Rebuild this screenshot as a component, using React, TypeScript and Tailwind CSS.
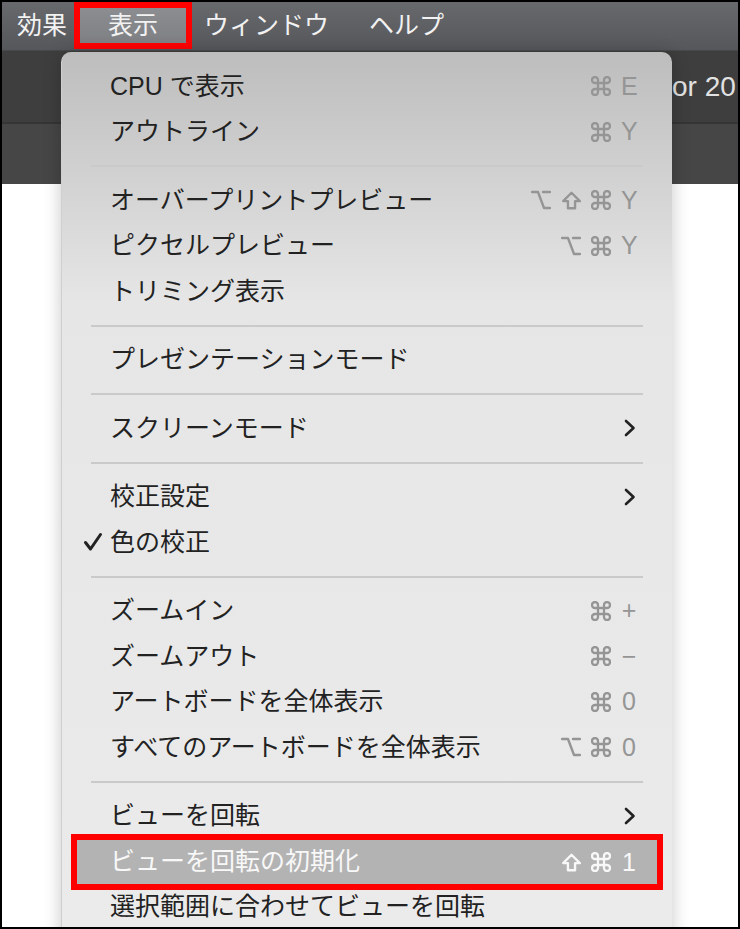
import React from "react";

type Item =
  | { sep: true }
  | {
      label: string;
      keys?: string[];
      sub?: boolean;
      check?: boolean;
      hl?: boolean;
    };

const items: Item[] = [
  { label: "CPU で表示", keys: ["cmd", "E"] },
  { label: "アウトライン", keys: ["cmd", "Y"] },
  { sep: true },
  { label: "オーバープリントプレビュー", keys: ["opt", "shift", "cmd", "Y"] },
  { label: "ピクセルプレビュー", keys: ["opt", "cmd", "Y"] },
  { label: "トリミング表示" },
  { sep: true },
  { label: "プレゼンテーションモード" },
  { sep: true },
  { label: "スクリーンモード", sub: true },
  { sep: true },
  { label: "校正設定", sub: true },
  { label: "色の校正", check: true },
  { sep: true },
  { label: "ズームイン", keys: ["cmd", "+"] },
  { label: "ズームアウト", keys: ["cmd", "−"] },
  { label: "アートボードを全体表示", keys: ["cmd", "0"] },
  { label: "すべてのアートボードを全体表示", keys: ["opt", "cmd", "0"] },
  { sep: true },
  { label: "ビューを回転", sub: true },
  { label: "ビューを回転の初期化", keys: ["shift", "cmd", "1"], hl: true },
  { label: "選択範囲に合わせてビューを回転" },
];

const KeyIcon = ({ k }: { k: string }) => {
  if (k === "cmd")
    return (
      <svg width="20" height="20" viewBox="2 2 20 20" className="shrink-0" fill="none" stroke="currentColor" strokeWidth="2.3">
        <path d="M15 6v12a3 3 0 1 0 3-3H6a3 3 0 1 0 3 3V6a3 3 0 1 0-3 3h12a3 3 0 1 0-3-3" />
      </svg>
    );
  if (k === "opt")
    return (
      <svg width="20" height="20" viewBox="2 2 20 20" className="shrink-0" fill="none" stroke="currentColor" strokeWidth="2.4" strokeLinecap="round" strokeLinejoin="round">
        <path d="M3 4h6l6 16h6" />
        <path d="M14 4h7" />
      </svg>
    );
  if (k === "shift")
    return (
      <svg width="19" height="19" viewBox="4 4 16 16" className="shrink-0" fill="none" stroke="currentColor" strokeWidth="2" strokeLinejoin="round">
        <path d="M9 18.5v-6H5l7-7 7 7h-4v6H9z" />
      </svg>
    );
  return null;
};

const Keys = ({ keys, light }: { keys: string[]; light?: boolean }) => (
  <div className={`flex items-center gap-[10px] ${light ? "text-[#f8f8f8]" : "text-[#959595]"}`}>
    {keys.map((k, i) =>
      i === keys.length - 1 ? (
        <span key={i} className="w-[16px] text-center text-[25px] leading-none font-['Liberation_Sans',sans-serif]">
          {k}
        </span>
      ) : (
        <span key={i} className="flex w-[20px] shrink-0 justify-center">
          <KeyIcon k={k} />
        </span>
      )
    )}
  </div>
);

const Chevron = () => (
  <svg width="12" height="18" viewBox="0 0 12 18" className="mr-[1px]">
    <path d="M2 2 L9.5 9 L2 16" fill="none" stroke="#222" strokeWidth="2.6" strokeLinecap="round" strokeLinejoin="round" />
  </svg>
);

const Check = () => (
  <svg width="20" height="20" viewBox="0 0 20 20" className="absolute left-[21px]">
    <path d="M2.5 10.5 L7.5 17 L17.5 2.5" fill="none" stroke="#222" strokeWidth="3" strokeLinecap="round" strokeLinejoin="round" />
  </svg>
);

export default function App() {
  return (
    <div className="relative w-[740px] h-[929px] overflow-hidden border-2 border-black bg-white font-['Liberation_Sans','Noto_Sans_CJK_JP',sans-serif]">
      {/* menu bar */}
      <div className="flex h-[48px] items-center bg-[linear-gradient(to_bottom,#68696d,#56575b)] text-[25px] text-[#f2f2f2]">
        <span className="ml-[15px]">効果</span>
        <div className="ml-[7px] flex h-[47px] w-[118px] items-center justify-center self-start border-[6px] border-[#ff0000] bg-[linear-gradient(to_bottom,#8c8d91,#7f8084)]">
          表示
        </div>
        <span className="ml-[12px]">ウィンドウ</span>
        <span className="ml-[40px]">ヘルプ</span>
      </div>
      {/* toolbar */}
      <div className="flex h-[72px] items-center overflow-hidden border-t border-[#48494c] bg-[#3e3e3e] text-[28px] text-[#e2e2e2]">
        <span className="ml-[670px] whitespace-nowrap">or 20</span>
      </div>
      <div className="h-[62px] border-t-2 border-[#353535] bg-[#464646]" />

      {/* dropdown */}
      <div className="absolute left-[59px] top-[50px] w-[611px] h-[900px] rounded-t-[10px] border-l border-[#cfcfcf] bg-[linear-gradient(to_bottom,#bdbdbd_0px,#e6e6e6_250px,#ebebeb_100%)] pt-[11.5px] text-[25px] text-[#222] shadow-[0_2px_18px_rgba(0,0,0,0.22)]">
        {items.map((it, i) => {
          if ("sep" in it) {
            return (
              <div key={i} className="flex h-[23px] items-center px-[29px]">
                <div className="h-[2px] w-full bg-[#cacaca]" />
              </div>
            );
          }
          if (it.hl) {
            return (
              <div key={i} className="relative z-10 mx-[9px] -mt-[4.5px] -mb-[6px] h-[56px] border-[6px] border-[#ff0000]">
                <div className="flex h-full items-center justify-between bg-[#b3b3b3] pl-[33px] pr-[20px] text-[#f8f8f8]">
                  <span>{it.label}</span>
                  {it.keys && <Keys keys={it.keys} light />}
                </div>
              </div>
            );
          }
          return (
            <div key={i} className="relative flex h-[45.5px] items-center justify-between pl-[48px] pr-[35px]">
              {it.check && <Check />}
              <span className="whitespace-nowrap">{it.label}</span>
              {it.keys && <Keys keys={it.keys} />}
              {it.sub && <Chevron />}
            </div>
          );
        })}
      </div>
    </div>
  );
}
